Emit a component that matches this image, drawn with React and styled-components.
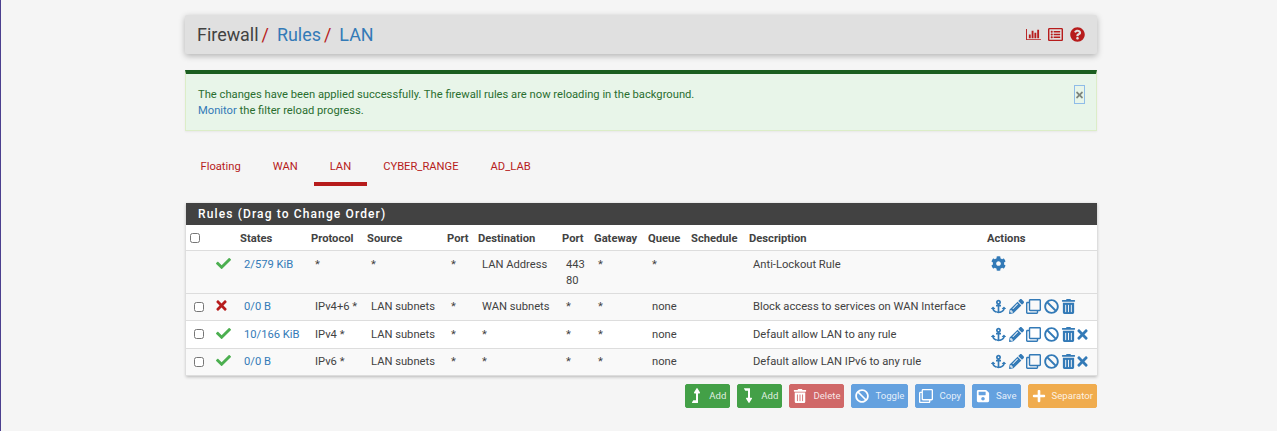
import styled, {createGlobalStyle} from "styled-components"
import {
  FaAnchor, FaPencilAlt, FaRegClone, FaBan, FaTrashAlt, FaTimes, FaCheck, FaCog,
  FaRegListAlt, FaQuestionCircle, FaSave, FaPlus,
} from "react-icons/fa"

const tabs = ["Floating", "WAN", "LAN", "CYBER_RANGE", "AD_LAB"]

const columns = [26, 24, 71, 56, 80, 31, 84, 32, 54, 43, 58, 238, 114]

const headers = ["", "States", "Protocol", "Source", "Port", "Destination", "Port", "Gateway", "Queue", "Schedule", "Description", "Actions"]

const rules = [
  {height: 43, check: false, status: "ok", states: "2/579 KiB", proto: "*", source: "*", port: "*", dest: "LAN Address", dport: <>443<br/>80</>, gateway: "*", queue: "*", desc: "Anti-Lockout Rule", actions: "cog", tall: true, striped: true},
  {height: 27, check: true, status: "no", states: "0/0 B", proto: "IPv4+6 *", source: "LAN subnets", port: "*", dest: "WAN subnets", dport: "*", gateway: "*", queue: "none", desc: "Block access to services on WAN Interface", actions: "fixed", striped: true},
  {height: 28, check: true, status: "ok", states: "10/166 KiB", proto: "IPv4 *", source: "LAN subnets", port: "*", dest: "*", dport: "*", gateway: "*", queue: "none", desc: "Default allow LAN to any rule", actions: "all"},
  {height: 27, check: true, status: "ok", states: "0/0 B", proto: "IPv6 *", source: "LAN subnets", port: "*", dest: "*", dport: "*", gateway: "*", queue: "none", desc: "Default allow LAN IPv6 to any rule", actions: "all", striped: true},
]

function BarChartIcon() {
  return (
    <svg width="15" height="13" viewBox="0 0 2048 1792" fill="currentColor">
      <path d="M640 896v512h-256v-512h256zm384-512v1024h-256v-1024h256zm1024 1152v128h-2048v-1536h128v1408h1920zm-640-896v768h-256v-768h256zm384-384v1152h-256v-1152h256z"/>
    </svg>
  )
}

function LevelUpIcon() {
  return (
    <svg viewBox="0 200 1024 1420" fill="currentColor" preserveAspectRatio="none">
      <path d="M1018 678q-18 38-58 38h-192v864q0 14-9 23t-23 9h-704q-21 0-29-18-8-20 4-35l160-192q9-11 25-11h320v-640h-192q-40 0-58-38-17-37 9-68l320-384q18-22 49-22t49 22l320 384q27 32 9 68z"/>
    </svg>
  )
}

function LevelDownIcon() {
  return (
    <svg viewBox="0 240 1024 1420" fill="currentColor" preserveAspectRatio="none">
      <path d="M32 256h704q13 0 22.5 9.5t9.5 23.5v863h192q40 0 58 37t-9 69l-320 384q-18 22-49 22t-49-22l-320-384q-26-31-9-69 18-37 58-37h192v-640h-320q-14 0-25-11l-160-192q-13-14-4-34 9-19 29-19z"/>
    </svg>
  )
}

function RowActions({kind}) {
  if (kind === "cog") return <ActionIcons><FaCog/></ActionIcons>
  return (
    <ActionIcons>
      <FaAnchor/>
      <FaPencilAlt/>
      <FaRegClone/>
      <FaBan/>
      <FaTrashAlt/>
      {kind === "all" && <RemoveIcon/>}
    </ActionIcons>
  )
}

export default function App() {
  return (
    <>
      <GlobalStyle/>
      <Page>
        <TitleBar>
          <Crumbs>
            Firewall<Slash>/</Slash><CrumbLink>Rules</CrumbLink><Slash>/</Slash><CrumbLink>LAN</CrumbLink>
          </Crumbs>
          <TitleIcons>
            <BarChartIcon/>
            <FaRegListAlt/>
            <FaQuestionCircle/>
          </TitleIcons>
        </TitleBar>

        <Alert>
          <p>The changes have been applied successfully. The firewall rules are now reloading in the background.</p>
          <p><Link>Monitor</Link> the filter reload progress.</p>
          <CloseButton><FaTimes/></CloseButton>
        </Alert>

        <TabBar>
          {tabs.map((t) => <Tab key={t} $active={t === "LAN"}>{t}</Tab>)}
        </TabBar>

        <Panel>
          <PanelTitle>Rules (Drag to Change Order)</PanelTitle>
          <RulesTable>
            <colgroup>
              {columns.map((w, i) => <col key={i} width={w}/>)}
            </colgroup>
            <thead>
              <tr>
                <HeadCell><Check/></HeadCell>
                {headers.map((h, i) => <HeadCell key={i}>{h}</HeadCell>)}
              </tr>
            </thead>
            <tbody>
              {rules.map((r, i) => (
                <Row key={i} $striped={r.striped} $height={r.height}>
                  <CheckCell>{r.check && <Check/>}</CheckCell>
                  <StatusCell $tall={r.tall} $ok={r.status === "ok"}>{r.status === "ok" ? <FaCheck/> : <FaTimes/>}</StatusCell>
                  <Cell $tall={r.tall}><Link>{r.states}</Link></Cell>
                  <Cell $tall={r.tall}>{r.proto}</Cell>
                  <Cell $tall={r.tall}>{r.source}</Cell>
                  <Cell $tall={r.tall}>{r.port}</Cell>
                  <Cell $tall={r.tall}>{r.dest}</Cell>
                  <Cell $tall={r.tall}>{r.dport}</Cell>
                  <Cell $tall={r.tall}>{r.gateway}</Cell>
                  <Cell $tall={r.tall}>{r.queue}</Cell>
                  <Cell/>
                  <Cell $tall={r.tall}>{r.desc}</Cell>
                  <ActionCell $tall={r.tall}><RowActions kind={r.actions}/></ActionCell>
                </Row>
              ))}
            </tbody>
          </RulesTable>
        </Panel>

        <ButtonRow>
          <Button $color="#43a047"><IconBox><LevelUpIcon/></IconBox>Add</Button>
          <Button $color="#43a047"><IconBox><LevelDownIcon/></IconBox>Add</Button>
          <Button $color="#d06868"><FaTrashAlt/>Delete</Button>
          <Button $color="#64a1df"><FaBan/>Toggle</Button>
          <Button $color="#64a1df"><FaRegClone/>Copy</Button>
          <Button $color="#64a1df"><FaSave/>Save</Button>
          <Button $color="#f0ac4e"><FaPlus/>Separator</Button>
        </ButtonRow>
      </Page>
    </>
  )
}

const GlobalStyle = createGlobalStyle`
  html, body {
    margin: 0;
    height: 100%;
    background: #f5f5f5;
  }
  body {
    border-left: 1px solid #4b3f8f;
    box-sizing: border-box;
    font-family: Roboto, "Liberation Sans", sans-serif;
    font-size: 11.2px;
    color: #424242;
    overflow: hidden;
  }
`
const Page = styled.div`
  width: 912px;
  margin-left: 184px;
  padding-top: 15px;
`
const TitleBar = styled.header`
  height: 39px;
  background: #e0e0e0;
  border-radius: 2px;
  box-shadow: 0 2px 6px rgba(0, 0, 0, 0.28);
  display: flex;
  align-items: center;
  justify-content: space-between;
  padding: 0 12px;
`
const Crumbs = styled.h1`
  margin: 0;
  font-size: 17.92px;
  font-weight: 400;
  color: #424242;
`
const CrumbLink = styled.span`
  color: #337ab7;
`
const Slash = styled.span`
  color: #b71c1c;
  margin: 0 8px 0 3px;
`
const TitleIcons = styled.div`
  display: flex;
  align-items: center;
  gap: 7px;
  color: #b71c1c;
  font-size: 15px;
`
const Alert = styled.div`
  position: relative;
  margin-top: 16px;
  height: 61px;
  box-sizing: border-box;
  background: #e8f5e9;
  border: 1px solid #dcedc8;
  border-top: 4px solid #1b5e20;
  padding: 13px 12px;
  color: #2a6e30;
  line-height: 16px;
  box-shadow: 0 1px 2px rgba(0, 0, 0, 0.06);

  p {
    margin: 0;
  }
`
const CloseButton = styled.span`
  position: absolute;
  top: 11px;
  right: 11px;
  width: 9px;
  height: 17px;
  border: 1px solid #8fbce8;
  display: flex;
  align-items: center;
  justify-content: center;
  color: #7d857d;
  font-size: 10px;
`
const Link = styled.span`
  color: #337ab7;
`
const TabBar = styled.nav`
  display: flex;
  margin: 20px 0 17px -0.5px;
  height: 35px;
`
const Tab = styled.div`
  padding: 0 16px;
  color: #b71c1c;
  line-height: 31px;
  border-bottom: 4px solid ${(props) => (props.$active ? "#b71c1c" : "transparent")};
`
const Panel = styled.section`
  background: #fff;
  box-shadow: 0 1px 3px rgba(0, 0, 0, 0.25);
  margin-left: 1px;
  width: 911px;
`
const PanelTitle = styled.h2`
  margin: 0;
  height: 22px;
  line-height: 22px;
  background: #424242;
  color: #fff;
  font-size: 12px;
  font-weight: 500;
  letter-spacing: 1.13px;
  padding-left: 12px;
`
const RulesTable = styled.table`
  width: 100%;
  table-layout: fixed;
  border-collapse: collapse;
`
const HeadCell = styled.th`
  height: 23px;
  padding: 2px 0 0 4px;
  text-align: left;
  font-weight: 700;
  font-size: 11.2px;
  color: #424242;
  border-bottom: 1px solid #ddd;
  white-space: nowrap;
`
const Row = styled.tr`
  background: ${(props) => (props.$striped ? "#f9f9f9" : "#fff")};
  height: ${(props) => props.$height}px;
`
const Cell = styled.td`
  padding: ${(props) => (props.$tall ? "6px" : "0")} 0 0 8px;
  vertical-align: ${(props) => (props.$tall ? "top" : "middle")};
  line-height: 16px;
  border-bottom: 1px solid #ddd;
  white-space: nowrap;
`
const ActionCell = styled(Cell)`
  padding-top: ${(props) => (props.$tall ? "4px" : "0")};
`
const CheckCell = styled(Cell)`
  padding-left: 8px;
`
const StatusCell = styled(Cell)`
  padding-left: 4px;
  padding-top: ${(props) => (props.$tall ? "5px" : "0")};
  font-size: 15px;
  color: ${(props) => (props.$ok ? "#4caf50" : "#b71c1c")};

  svg {
    margin-left: ${(props) => (props.$ok ? "0" : "-2px")};
  }
`
const Check = styled.input.attrs({type: "checkbox"})`
  margin: 0 0 1px;
  width: 10px;
  height: 10px;
  display: block;
`
const ActionIcons = styled.div`
  display: flex;
  align-items: center;
  gap: 2.5px;
  color: #337ab7;
  font-size: 15px;
  height: 16px;
  margin-bottom: 1px;
`
const RemoveIcon = styled(FaTimes)`
  margin-left: -4px;
`
const ButtonRow = styled.div`
  display: flex;
  justify-content: flex-end;
  gap: 7px;
  margin-top: 8px;
`
const IconBox = styled.span`
  display: flex;
  justify-content: center;
  width: 14px;

  svg {
    width: 8px;
    height: 15px;
  }
`
const Button = styled.button`
  display: flex;
  align-items: center;
  gap: 6px;
  height: 24px;
  padding: 0 3px 1px;
  border: 1px solid ${(props) => props.$color};
  border-radius: 2px;
  background: ${(props) => props.$color};
  color: rgba(255, 255, 255, 0.85);
  font-family: Roboto, sans-serif;
  font-size: 9.6px;

  svg {
    font-size: 14px;
    color: #fff;
  }
`
